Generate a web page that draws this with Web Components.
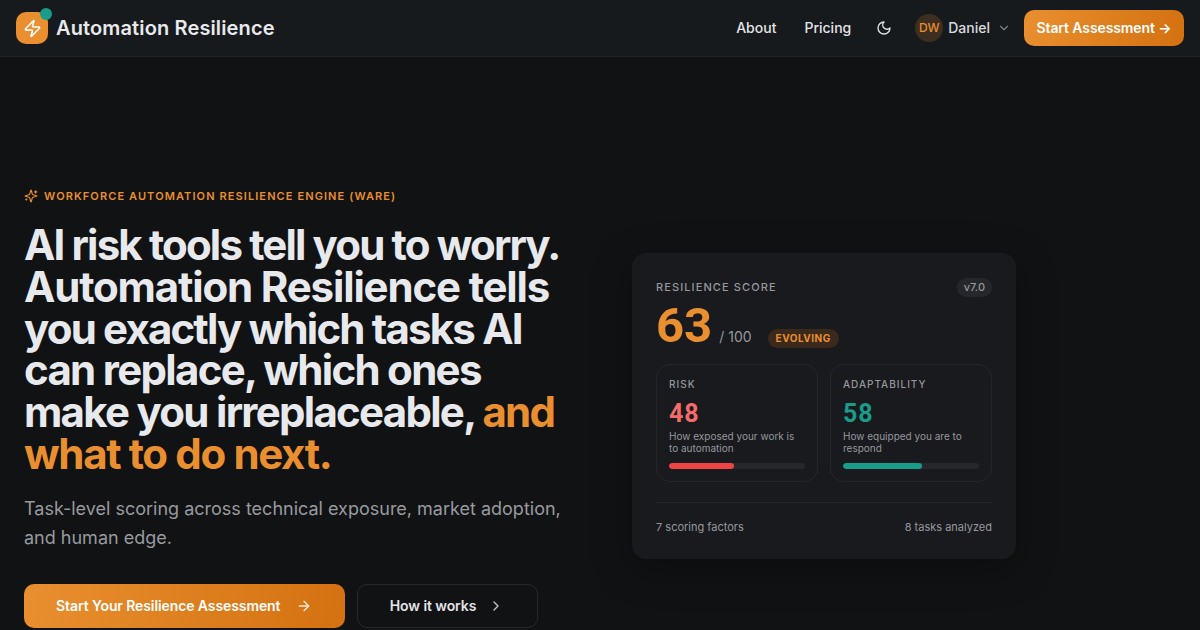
<!doctype html>
<html lang="en">
<head>
<meta charset="utf-8">
<title>Automation Resilience</title>
<style>
html, body { margin: 0; height: 630px; overflow: hidden; background: #111214; color: #e8e9ec; font-family: Inter, "Liberation Sans", sans-serif; }
</style>
</head>
<body>
<app-nav></app-nav>
<hero-section>
  <resilience-card></resilience-card>
</hero-section>
<script>
const ICONS = {
  zap: '<path d="M4 14a1 1 0 0 1-.78-1.63l9.9-10.2a.5.5 0 0 1 .86.46l-1.92 6.02A1 1 0 0 0 13 10h7a1 1 0 0 1 .78 1.63l-9.9 10.2a.5.5 0 0 1-.86-.46l1.92-6.02A1 1 0 0 0 11 14z"/>',
  moon: '<path d="M12 3a6 6 0 0 0 9 9 9 9 0 1 1-9-9Z"/>',
  chevronDown: '<path d="m6 9 6 6 6-6"/>',
  chevronRight: '<path d="m9 18 6-6-6-6"/>',
  arrowRight: '<path d="M5 12h14"/><path d="m12 5 7 7-7 7"/>',
  sparkles: '<path d="M9.94 15.5A2 2 0 0 0 8.5 14.06l-6.14-1.58a.5.5 0 0 1 0-.96L8.5 9.94A2 2 0 0 0 9.94 8.5l1.58-6.14a.5.5 0 0 1 .96 0l1.58 6.14a2 2 0 0 0 1.44 1.44l6.14 1.58a.5.5 0 0 1 0 .96l-6.14 1.58a2 2 0 0 0-1.44 1.44l-1.58 6.14a.5.5 0 0 1-.96 0z"/><path d="M20 3v4"/><path d="M22 5h-4"/><path d="M4 17v2"/><path d="M5 18H3"/>'
};

const icon = (name, size, width = 2) =>
  `<svg width="${size}" height="${size}" viewBox="0 0 24 24" fill="none" stroke="currentColor" stroke-width="${width}" stroke-linecap="round" stroke-linejoin="round">${ICONS[name]}</svg>`;

class AppNav extends HTMLElement {
  constructor() {
    super();
    this.attachShadow({mode: 'open'});
    this.shadowRoot.innerHTML = `
<style>
:host { display: flex; align-items: center; justify-content: space-between; box-sizing: border-box; height: 57px; padding: 0 16px; background: #171a1d; border-bottom: 1px solid #222529; }
.brand { display: flex; align-items: center; gap: 8px; }
.logo { position: relative; display: flex; align-items: center; justify-content: center; width: 32px; height: 32px; border-radius: 10px; background: #e98f2f; color: #fff; }
.dot { position: absolute; top: -4px; right: -4px; width: 12px; height: 12px; border-radius: 50%; background: #1a9c8a; }
.title { font-size: 20px; font-weight: 600; letter-spacing: 0.13px; color: #e8e9ec; }
.links { display: flex; align-items: center; }
.link { font-size: 14px; font-weight: 500; line-height: 16px; padding-bottom: 1px; color: #e3e4e8; }
.about { margin-right: 28px; }
.moon { display: flex; margin-left: 25px; color: #e3e4e8; }
.user { display: flex; align-items: center; margin-left: 23px; gap: 5px; }
.avatar { display: flex; align-items: center; justify-content: center; box-sizing: border-box; width: 28px; height: 28px; padding-bottom: 2px; border-radius: 50%; background: #3e2e20; color: #e98f2f; font-size: 12px; font-weight: 500; }
.name { font-size: 14px; font-weight: 500; line-height: 16px; padding-bottom: 1px; color: #d9dade; }
.chev { display: flex; color: #7c7f86; margin-left: 2px; }
.cta { display: flex; align-items: center; justify-content: center; box-sizing: border-box; width: 160px; height: 36px; padding-bottom: 2px; margin-left: 13px; border-radius: 10px; background: linear-gradient(100deg, #e98f2f, #d47110); color: #fff; font-size: 14px; font-weight: 600; letter-spacing: -0.1px; }
</style>
<div class="brand">
  <span class="logo">${icon('zap', 19)}<span class="dot"></span></span>
  <span class="title">Automation Resilience</span>
</div>
<div class="links">
  <span class="link about">About</span>
  <span class="link">Pricing</span>
  <span class="moon">${icon('moon', 16)}</span>
  <span class="user">
    <span class="avatar">DW</span>
    <span class="name">Daniel</span>
    <span class="chev">${icon('chevronDown', 14)}</span>
  </span>
  <span class="cta">Start Assessment →</span>
</div>`;
  }
}

class HeroSection extends HTMLElement {
  constructor() {
    super();
    this.attachShadow({mode: 'open'});
    this.shadowRoot.innerHTML = `
<style>
:host { display: grid; grid-template-columns: 608px 384px; padding: 132px 0 0 24px; align-items: center; }
.eyebrow { display: flex; align-items: center; gap: 6px; color: #e98f2f; font-size: 11px; font-weight: 600; letter-spacing: 0.1em; line-height: 14px; }
.eyebrow svg { display: block; }
h1 { margin: 21px 0 0; font-size: 42px; line-height: 41.8px; font-weight: 700; color: #e8e9ec; }
h1 span { display: block; white-space: nowrap; }
h1 em { font-style: normal; color: #e98f2f; }
p { margin: 19px 0 0; max-width: 545px; font-size: 18px; line-height: 29px; color: #989a9f; }
.actions { display: flex; gap: 12px; margin-top: 32px; }
.btn { display: flex; align-items: center; justify-content: center; box-sizing: border-box; height: 44px; border-radius: 10px; font-size: 14px; font-weight: 600; letter-spacing: -0.1px; }
.primary { width: 320.5px; gap: 16px; background: linear-gradient(100deg, #e98f2f, #d47110); color: #fff; }
.secondary { width: 181px; gap: 12px; border: 1px solid #26282d; color: #e3e4e8; }
.btn svg { opacity: .85; }
</style>
<div class="left">
  <div class="eyebrow">${icon('sparkles', 14)}<span>WORKFORCE AUTOMATION RESILIENCE ENGINE (WARE)</span></div>
  <h1>
    <span style="letter-spacing:-1.85px">AI risk tools tell you to worry.</span>
    <span style="letter-spacing:-1.16px">Automation Resilience tells</span>
    <span style="letter-spacing:-1.82px">you exactly which tasks AI</span>
    <span style="letter-spacing:-1.7px">can replace, which ones</span>
    <span style="letter-spacing:-1.72px">make you irreplaceable, <em>and</em></span>
    <span style="letter-spacing:-1.36px"><em>what to do next.</em></span>
  </h1>
  <p>Task-level scoring across technical exposure, market adoption, and human edge.</p>
  <div class="actions">
    <span class="btn primary">Start Your Resilience Assessment ${icon('arrowRight', 16)}</span>
    <span class="btn secondary">How it works ${icon('chevronRight', 16)}</span>
  </div>
</div>
<slot></slot>`;
  }
}

class MetricBox extends HTMLElement {
  constructor() {
    super();
    this.attachShadow({mode: 'open'});
    const color = this.getAttribute('color');
    const fill = this.getAttribute('fill') || color;
    this.shadowRoot.innerHTML = `
<style>
:host { display: block; box-sizing: border-box; height: 118px; padding: 12px 12px 0; border: 1px solid #24262a; border-radius: 14px; }
.label { font-size: 10px; line-height: 14px; font-weight: 500; letter-spacing: 0.1em; color: #96989d; }
.value { margin-top: 8px; font-family: Roboto, sans-serif; font-size: 25px; line-height: 30px; font-weight: 700; letter-spacing: 0.04em; color: ${color}; }
.desc { margin-top: 1px; font-size: 10px; line-height: 12px; color: #96989d; }
.track { height: 6px; margin-top: 9px; border-radius: 3px; background: #25272b; overflow: hidden; }
.bar { height: 100%; width: ${this.getAttribute('value')}%; border-radius: 3px; background: ${fill}; }
</style>
<div class="label">${this.getAttribute('label')}</div>
<div class="value">${this.getAttribute('value')}</div>
<div class="desc"><slot></slot></div>
<div class="track"><div class="bar"></div></div>`;
  }
}

class ResilienceCard extends HTMLElement {
  constructor() {
    super();
    this.attachShadow({mode: 'open'});
    this.shadowRoot.innerHTML = `
<style>
:host { display: block; box-sizing: border-box; width: 384px; height: 306px; margin-bottom: 4px; padding: 24px; border-radius: 14px; background: #181a1d; box-shadow: 0 10px 40px rgba(0,0,0,.3); }
.top { display: flex; align-items: center; justify-content: space-between; height: 20px; }
.heading { font-size: 11px; font-weight: 500; letter-spacing: 0.1em; color: #96989d; }
.version { padding: 0 7px; height: 19px; line-height: 19px; border-radius: 10px; background: #25272b; color: #96989d; font-size: 11px; font-weight: 500; }
.score { display: flex; align-items: baseline; height: 52px; margin-top: 3px; }
.big { font-family: Roboto, sans-serif; font-size: 49px; line-height: 52px; font-weight: 700; color: #e98f2f; }
.max { margin-left: 7px; font-size: 14px; color: #96989d; }
.badge { margin-left: 16px; padding: 0 8px; height: 19px; line-height: 19px; border-radius: 10px; background: #3b2a1b; color: #e98f2f; font-size: 10px; font-weight: 700; letter-spacing: 0.05em; }
.grid { display: grid; grid-template-columns: 1fr 1fr; gap: 12px; margin-top: 12px; }
.foot { display: flex; justify-content: space-between; margin-top: 20px; padding-top: 17px; border-top: 1px solid #24262a; font-size: 11px; line-height: 14px; color: #96989d; }
</style>
<div class="top"><span class="heading">RESILIENCE SCORE</span><span class="version">v7.0</span></div>
<div class="score"><span class="big">63</span><span class="max">/ 100</span><span class="badge">EVOLVING</span></div>
<div class="grid">
  <metric-box label="RISK" value="48" color="#f56b6b" fill="#ef4444">How exposed your work is to automation</metric-box>
  <metric-box label="ADAPTABILITY" value="58" color="#1a9c8a">How equipped you are to respond</metric-box>
</div>
<div class="foot"><span>7 scoring factors</span><span>8 tasks analyzed</span></div>`;
  }
}

customElements.define('metric-box', MetricBox);
customElements.define('resilience-card', ResilienceCard);
customElements.define('app-nav', AppNav);
customElements.define('hero-section', HeroSection);
</script>
</body>
</html>
